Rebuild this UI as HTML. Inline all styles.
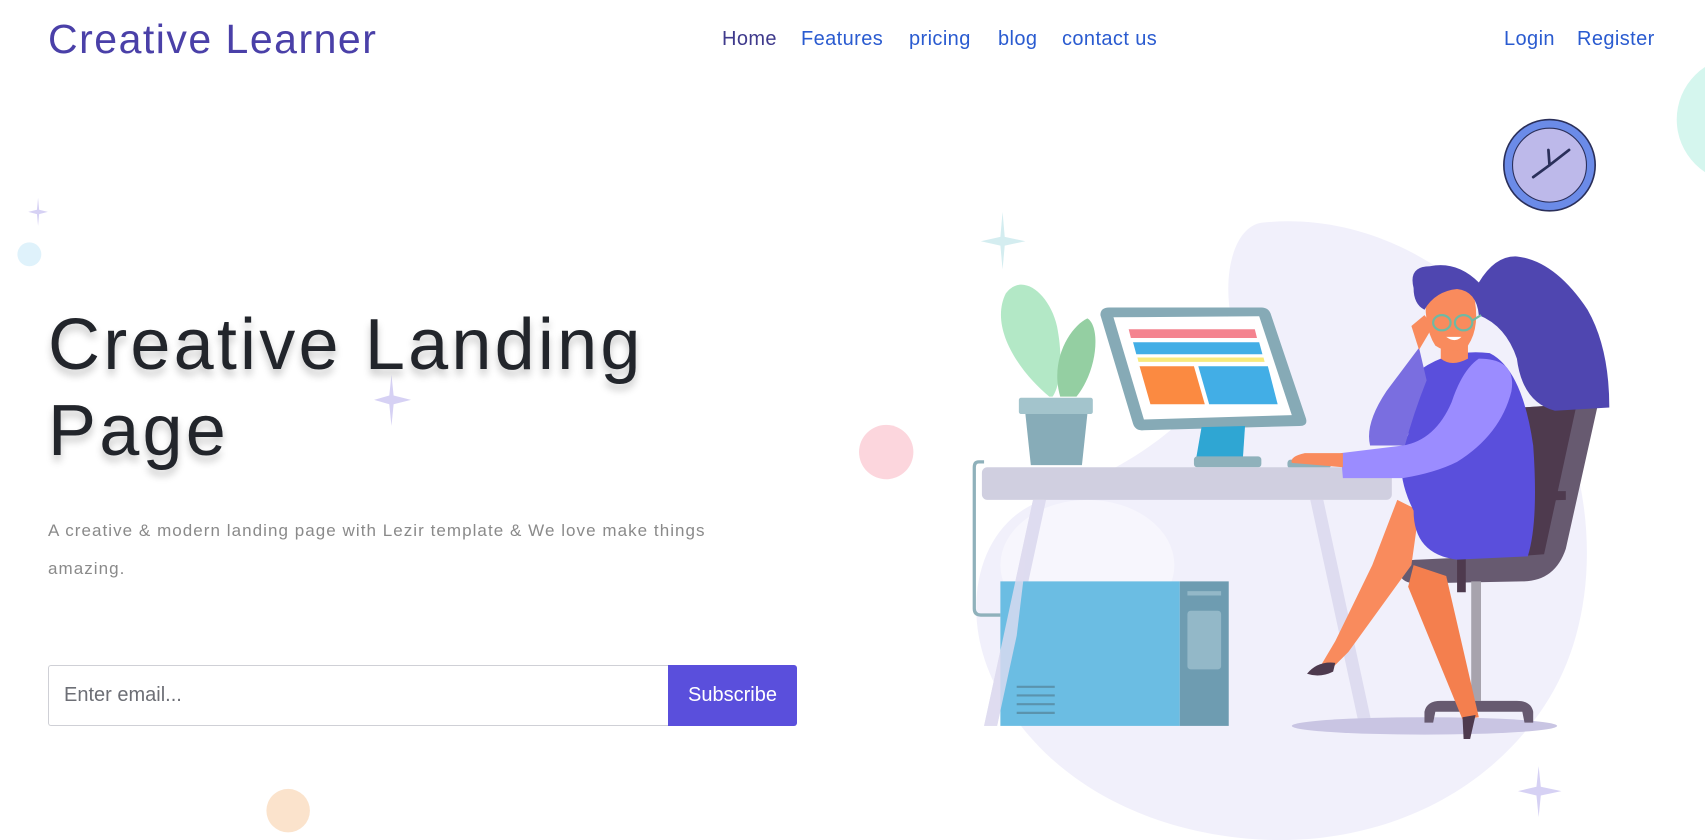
<!DOCTYPE html>
<html><head><meta charset="utf-8"><style>
*{margin:0;padding:0;box-sizing:border-box}
body{width:1705px;height:840px;overflow:hidden;background:#fff;font-family:"Liberation Sans",sans-serif;position:relative}
#art{position:absolute;left:0;top:0;width:1705px;height:840px}
.logo{position:absolute;left:48px;top:16px;font-size:41px;color:#4a40a8;letter-spacing:1.5px}
.nav a{position:absolute;top:28px;font-size:20px;color:#2a5bd0;text-decoration:none;letter-spacing:0.4px}
h1{position:absolute;left:48px;top:302px;font-size:72px;font-weight:normal;line-height:86px;color:#22252b;text-shadow:0 6px 8px rgba(0,0,0,.22);letter-spacing:3.2px}
p{position:absolute;left:48px;top:512px;width:800px;font-size:17px;line-height:38px;color:#8a8a8a;letter-spacing:1.05px}
.inp{position:absolute;left:48px;top:665px;width:620px;height:61px;border:1px solid #cfd0d6;border-right:none;border-radius:3px 0 0 3px;font-size:20px;color:#6d6f76;padding:18px 0 0 15px}
.btn{position:absolute;left:668px;top:665px;width:129px;height:61px;background:#5a4fdc;color:#fff;font-size:20px;text-align:center;line-height:61px;border-radius:0 3px 3px 0}
</style></head><body>
<svg id="art" viewBox="0 0 1568 773" preserveAspectRatio="none">
<circle cx="1600" cy="110" r="58" fill="#d5f6ee"/>
<circle cx="27" cy="234" r="11" fill="#dff2fb"/>
<circle cx="815" cy="416" r="25" fill="#fcd6dd"/>
<circle cx="265" cy="746" r="20" fill="#fbe3cc"/>
<g fill="#d6d1f4"><path d="M35 182 L36 193 L44 195 L36 197 L35 208 L34 197 L26 195 L34 193Z"/><path d="M360 345 L362 364 L378 368 L362 372 L360 392 L358 372 L344 368 L358 364Z"/><path d="M1415 705 L1417 724 L1436 728 L1417 732 L1415 752 L1413 732 L1396 728 L1413 724Z"/></g>
<path d="M922 195 L924 218 L943 222 L924 226 L922 248 L920 226 L902 222 L920 218Z" fill="#d4edf0"/>
<path d="M1160 205 C1250 195 1340 240 1400 320 C1470 420 1480 560 1420 650 C1360 740 1260 775 1170 773 C1060 770 960 720 915 630 C880 560 900 480 960 460 C1040 430 1100 390 1140 320 C1120 270 1130 210 1160 205Z" fill="#f1f0fb"/>
<ellipse cx="1000" cy="520" rx="80" ry="60" fill="#f7f6fd"/>
<circle cx="1425" cy="152" r="42" fill="#6b8be8" stroke="#2a2f5a" stroke-width="1.5"/>
<circle cx="1425" cy="152" r="34" fill="#bdb9ea" stroke="#2a2f5a" stroke-width="1"/>
<path d="M1425 152 L1424 138 M1425 152 L1443 138 M1425 152 L1410 163" stroke="#2a2f5a" stroke-width="2.5" stroke-linecap="round"/>
<path d="M965 365 C935 340 910 300 925 270 C940 250 965 270 972 300 C978 330 975 355 968 365Z" fill="#b3e8c6"/>
<path d="M975 365 C965 330 985 300 1000 293 C1012 300 1010 340 990 365Z" fill="#94cfa2"/>
<rect x="937" y="366" width="68" height="15" rx="2" fill="#a3c4cc"/>
<path d="M943 381 L1000 381 L995 428 L948 428Z" fill="#87acb8"/>
<path d="M905 425 L900 425 Q896 425 896 430 L896 560 Q896 566 902 566 L920 566" fill="none" stroke="#8fb1bb" stroke-width="3"/>
<path d="M1012 290 Q1012 283 1020 283 L1160 283 Q1167 283 1169 290 L1201 385 Q1203 392 1195 392 L1050 396 Q1044 396 1042 390Z" fill="#86aab6"/>
<path d="M1024 292 L1158 291 L1188 382 L1052 386Z" fill="#fff"/>
<path d="M1038 303 L1154 303 L1156 311 L1040 311Z" fill="#f4838f"/>
<path d="M1042 315 L1158 315 L1161 326 L1045 326Z" fill="#42aee6"/>
<path d="M1046 329 L1162 329 L1163 333 L1047 333Z" fill="#f7ea7c"/>
<path d="M1048 337 L1098 337 L1108 372 L1058 372Z" fill="#fb8a41"/>
<path d="M1102 337 L1166 337 L1175 372 L1112 372Z" fill="#42aee6"/>
<path d="M1105 393 L1145 392 L1143 422 L1100 422Z" fill="#2fa6d3"/>
<rect x="1098" y="420" width="62" height="10" rx="3" fill="#8fb1bb"/>
<rect x="1184" y="423" width="40" height="8" rx="3" fill="#8fb1bb"/>
<path d="M950 460 L905 668 L917 668 L962 460Z M1205 460 L1250 668 L1262 668 L1217 460Z" fill="#dedcf0"/>
<rect x="903" y="430" width="377" height="30" rx="5" fill="#d0cfe0"/>
<rect x="920" y="535" width="165" height="133" fill="#6bbde3"/>
<rect x="1085" y="535" width="45" height="133" fill="#6e9cb1"/>
<rect x="1092" y="562" width="31" height="54" rx="3" fill="#93b8c8"/>
<rect x="1092" y="544" width="31" height="4" fill="#93b8c8"/>
<path d="M935 632 H970 M935 640 H970 M935 648 H970 M935 656 H970" stroke="#5a93ad" stroke-width="2"/>
<path d="M950 460 L905 668 L917 668 L935 585Z" fill="#dedcf0" opacity=".8"/>
<ellipse cx="1310" cy="668" rx="122" ry="8" fill="#c9c5e3"/>
<path d="M1400 375 L1470 370 L1440 505 Q1430 535 1400 535 L1300 537 Q1285 535 1287 522 Q1290 515 1305 515 L1410 510Z" fill="#675a70"/>
<path d="M1400 375 L1450 372 L1420 510 L1395 512Z" fill="#4e3a4e"/>
<path d="M1340 545 L1340 480 Q1342 455 1370 452 L1440 452 L1440 460 L1372 462 Q1350 465 1348 490 L1348 545Z" fill="#4e3a4e"/>
<rect x="1353" y="535" width="9" height="110" fill="#a7a3ad"/>
<path d="M1310 665 L1310 655 Q1312 645 1325 645 L1395 645 Q1408 645 1410 655 L1410 665 L1402 665 L1400 655 L1320 655 L1318 665Z" fill="#675a70"/>
<path d="M1300 520 L1330 530 L1360 660 L1345 662 L1295 540Z" fill="#f47f4e"/>
<path d="M1285 460 L1305 470 L1298 520 L1240 600 L1225 615 L1215 612 L1228 590 L1262 520Z" fill="#f98b5d"/>
<path d="M1202 620 Q1212 608 1228 610 L1226 618 Q1214 624 1202 620Z" fill="#4e3a4e"/>
<path d="M1345 660 L1357 658 L1352 680 L1346 680Z" fill="#4e3a4e"/>
<path d="M1300 345 Q1330 320 1370 325 Q1400 340 1410 410 Q1415 480 1405 512 L1340 515 Q1300 510 1300 470 Q1280 430 1295 400Z" fill="#5a4fdc"/>
<path d="M1305 320 Q1290 340 1275 360 Q1255 390 1260 410 L1292 410 Q1300 380 1312 350Z" fill="#7a6ee0"/>
<path d="M1360 330 Q1395 330 1390 360 Q1380 400 1340 425 Q1320 435 1290 440 L1235 440 L1233 417 L1290 410 Q1320 405 1335 370 Q1345 340 1360 330Z" fill="#9b8cff"/>
<path d="M1235 417 L1200 417 Q1186 420 1188 426 L1235 430Z" fill="#f98b5d"/>
<path d="M1325 300 L1325 330 Q1335 338 1350 330 L1350 305Z" fill="#f98b5d"/>
<path d="M1312 262 Q1340 255 1355 270 Q1362 300 1350 318 Q1335 328 1320 318 Q1308 300 1312 262Z" fill="#f98b5d"/>
<path d="M1298 300 L1310 290 L1318 300 L1305 322Z" fill="#f98b5d"/>
<path d="M1300 265 Q1295 245 1315 245 Q1340 240 1360 260 Q1375 235 1395 236 Q1430 240 1460 285 Q1480 320 1480 375 L1430 378 Q1400 370 1395 330 Q1385 300 1360 290 Q1358 268 1340 266 Q1320 268 1310 285 Q1300 280 1300 265Z" fill="#4f46b0"/>
<path d="M1318 297 a8 7 0 1 0 16 0 a8 7 0 1 0 -16 0 M1338 297 a8 7 0 1 0 16 0 a8 7 0 1 0 -16 0 M1354 295 L1362 290" fill="none" stroke="#6fb9a3" stroke-width="2"/>
<path d="M1330 310 Q1338 316 1344 310" fill="#fff"/>
</svg>
<div class="logo">Creative Learner</div>
<div class="nav">
<a style="left:722px;color:#3f3a8c">Home</a><a style="left:801px">Features</a><a style="left:909px">pricing</a><a style="left:998px">blog</a><a style="left:1062px">contact us</a><a style="left:1504px">Login</a><a style="left:1577px">Register</a>
</div>
<h1>Creative Landing<br>Page</h1>
<p>A creative &amp; modern landing page with Lezir template &amp; We love make things<br>amazing.</p>
<div class="inp">Enter email...</div>
<div class="btn">Subscribe</div>
</body></html>
